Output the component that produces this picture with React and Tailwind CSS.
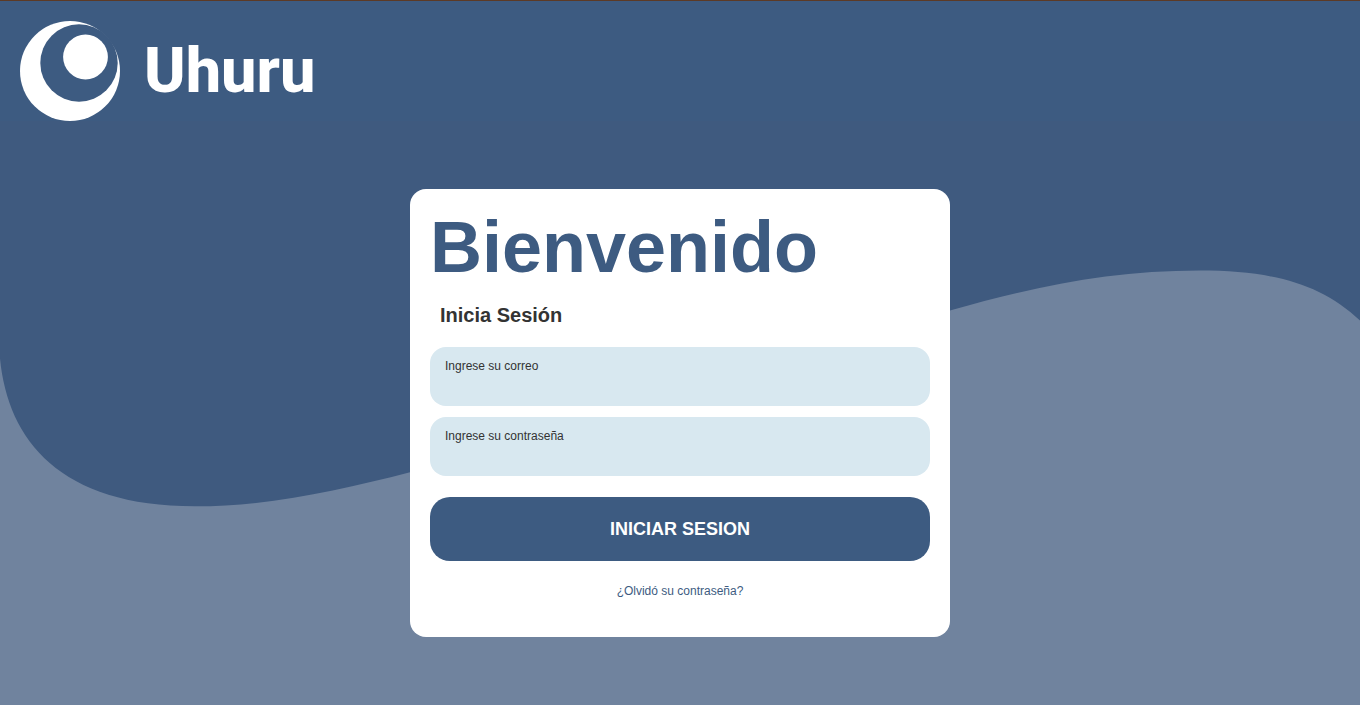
function Logo() {
  return (
    <a href="#" className="flex items-center gap-6 text-white">
      <svg viewBox="0 0 100 100" className="size-25" aria-hidden="true">
        <mask id="crescent">
          <rect width="100" height="100" fill="white" />
          <circle cx="59" cy="42" r="38.7" fill="black" />
        </mask>
        <circle cx="50" cy="50" r="50" fill="currentColor" mask="url(#crescent)" />
        <circle cx="65.5" cy="36" r="22.4" fill="currentColor" />
      </svg>
      <span className="font-[family-name:Roboto,sans-serif] text-[63px] leading-[64px] font-extrabold">Uhuru</span>
    </a>
  );
}

function Wave() {
  return (
    <svg
      viewBox="0 0 1360 705"
      preserveAspectRatio="none"
      className="absolute inset-0 -z-10 size-full"
      aria-hidden="true"
    >
      <path
        d="M0 358 C8 440 60 506 195 506 C270 506 340 490 410 472 C600 420 760 365 950 310 C1035 286 1110 270 1200 270 C1270 270 1320 282 1360 320 V705 H0 Z"
        fill="#70839e"
      />
    </svg>
  );
}

function Field({ id, label, type }) {
  return (
    <div className="flex flex-col rounded-2xl bg-[#d8e8f0] px-[15px] pt-[11px] pb-1 text-xs leading-4 text-[#333333]">
      <label htmlFor={id}>{label}</label>
      <input id={id} name={id} type={type} className="h-7 w-full bg-transparent text-sm outline-none" />
    </div>
  );
}

export default function App() {
  return (
    <div className="relative isolate flex min-h-screen flex-col border-t border-[#5c3a26] bg-[#3f5a7f] font-['Liberation_Sans',Arial,sans-serif]">
      <Wave />
      <header className="flex bg-[#3d5b81] px-5 pt-5">
        <Logo />
      </header>
      <main className="flex flex-1 items-center justify-center">
        <form
          className="flex w-full max-w-[540px] flex-col rounded-2xl bg-white p-5"
          onSubmit={(event) => event.preventDefault()}
        >
          <h1 className="text-[72px] leading-[76px] font-bold text-[#3d5b81]">Bienvenido</h1>
          <h2 className="mt-[18px] px-[10px] text-xl leading-6 font-bold text-[#333333]">Inicia Sesión</h2>
          <div className="mt-5 flex flex-col gap-[11px]">
            <Field id="correo" label="Ingrese su correo" type="email" />
            <Field id="contrasena" label="Ingrese su contraseña" type="password" />
          </div>
          <button type="submit" className="mt-[21px] h-16 rounded-[20px] bg-[#3d5b81] text-lg font-bold text-white">
            INICIAR SESION
          </button>
          <a href="#" className="mt-[22px] mb-[18px] self-center text-xs leading-4 text-[#3d5b81]">
            ¿Olvidó su contraseña?
          </a>
        </form>
      </main>
    </div>
  );
}
